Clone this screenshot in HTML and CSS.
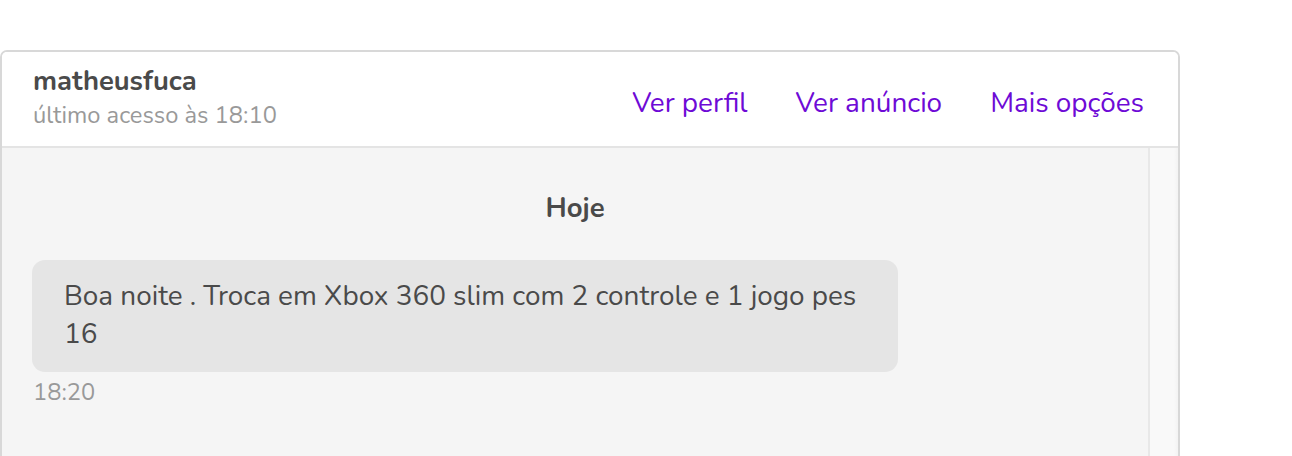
FILE: index.html
```html
<!DOCTYPE html>
<html lang="pt-BR">
<head>
<meta charset="utf-8">
<link rel="stylesheet" href="styles.css">
</head>
<body>
<div class="chat">
  <header class="chat-header">
    <div class="user">
      <div class="user-name">matheusfuca</div>
      <div class="user-status">último acesso às 18:10</div>
    </div>
    <nav class="actions">
      <a class="action" href="#">Ver perfil</a>
      <a class="action" href="#">Ver anúncio</a>
      <a class="action" href="#">Mais opções</a>
    </nav>
  </header>
  <div class="chat-body">
    <div class="messages">
      <div class="day">Hoje</div>
      <div class="message">
        <div class="bubble">Boa noite . Troca em Xbox 360 slim com 2 controle e 1 jogo pes 16</div>
        <div class="time">18:20</div>
      </div>
    </div>
    <div class="scrollbar"></div>
  </div>
</div>
</body>
</html>
```

FILE: styles.css
```css
* { box-sizing: border-box; }
html, body { margin: 0; background: #fff; }
body {
  font-family: "Nunito", "Open Sans", sans-serif;
  color: #4a4a4a;
  height: 456px;
  overflow: hidden;
}
.chat {
  margin-top: 50px;
  width: 1180px;
  height: 406px;
  border: 2px solid #d8d8d8;
  border-bottom: none;
  border-radius: 7px 7px 0 0;
  overflow: hidden;
  display: flex;
  flex-direction: column;
}
.chat-header {
  height: 96px;
  flex: none;
  background: #fff;
  border-bottom: 2px solid #e4e4e4;
  display: flex;
  align-items: flex-start;
  justify-content: space-between;
  padding: 13px 34px 0 31px;
}
.user { display: flex; flex-direction: column; gap: 3px; }
.user-name { font-size: 27.4px; font-weight: 700; line-height: 32px; color: #4a4a4a; }
.user-status { font-size: 23.7px; line-height: 30px; color: #999; }
.actions { display: flex; gap: 48px; margin-top: 22px; }
.action { font-size: 27.9px; line-height: 32px; color: #6e0ad6; text-decoration: none; }
.chat-body {
  flex: 1;
  display: flex;
  background: #f5f5f5;
}
.messages {
  flex: 1;
  padding: 44px 30px 0 30px;
}
.day {
  text-align: center;
  font-weight: 700;
  font-size: 27.5px;
  line-height: 32px;
  margin-bottom: 36px;
}
.message { width: 866px; }
.bubble {
  background: #e5e5e5;
  border-radius: 13px;
  padding: 17px 32px 19px 32px;
  font-size: 27.9px;
  line-height: 38px;
  color: #4a4a4a;
}
.time {
  font-size: 23.7px;
  line-height: 30px;
  color: #999;
  margin-top: 5px;
  padding-left: 1px;
}
.scrollbar {
  width: 30px;
  background: linear-gradient(to right, #f9f9f9 85%, #f3f3f3);
  border-left: 2px solid #e8e8e8;
}
```
